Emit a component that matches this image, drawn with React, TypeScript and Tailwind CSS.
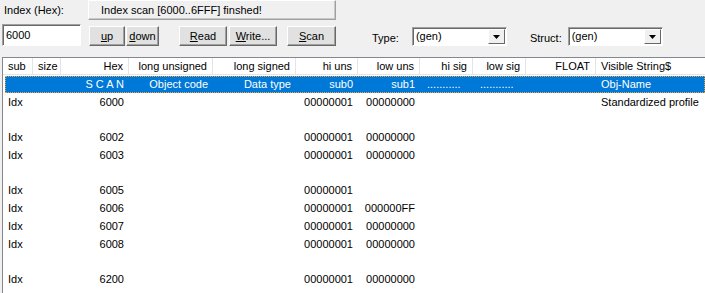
import React from "react";

type Col = { w: number; label: string; align: "left" | "right" };

const cols: Col[] = [
  { w: 30, label: "sub", align: "left" },
  { w: 28, label: "size", align: "left" },
  { w: 68, label: "Hex", align: "right" },
  { w: 84, label: "long unsigned", align: "right" },
  { w: 83, label: "long signed", align: "right" },
  { w: 62, label: "hi uns", align: "right" },
  { w: 62, label: "low uns", align: "right" },
  { w: 53, label: "hi sig", align: "right" },
  { w: 53, label: "low sig", align: "right" },
  { w: 70, label: "FLOAT", align: "right" },
  { w: 0, label: "Visible String$", align: "left" },
];

// one entry per list row, null = empty line
const rows: (string[] | null)[] = [
  ["Idx", "", "6000", "", "", "00000001", "00000000", "", "", "", "Standardized profile"],
  null,
  ["Idx", "", "6002", "", "", "00000001", "00000000", "", "", "", ""],
  ["Idx", "", "6003", "", "", "00000001", "00000000", "", "", "", ""],
  null,
  ["Idx", "", "6005", "", "", "00000001", "", "", "", "", ""],
  ["Idx", "", "6006", "", "", "00000001", "000000FF", "", "", "", ""],
  ["Idx", "", "6007", "", "", "00000001", "00000000", "", "", "", ""],
  ["Idx", "", "6008", "", "", "00000001", "00000000", "", "", "", ""],
  null,
  ["Idx", "", "6200", "", "", "00000001", "00000000", "", "", "", ""],
];

const selected = ["", "", "S C A N", "Object code", "Data type", "sub0", "sub1", "...........", "...........", "", "Obj-Name"];

const Btn = ({ children, w, ml }: { children: React.ReactNode; w: string; ml: string }) => (
  <button
    className={`${w} ${ml} h-[20px] mt-[2px] bg-[#e1e1e1] border border-t-white border-l-white border-r-[#696969] border-b-[#696969] shadow-[inset_-1px_-1px_0_#a0a0a0] text-[11px] text-black leading-none flex items-center justify-center`}
  >
    {children}
  </button>
);

const Combo = ({ ml }: { ml: string }) => (
  <div
    className={`${ml} w-[95px] h-[19px] mt-[3px] bg-white border border-t-[#a0a0a0] border-l-[#a0a0a0] border-r-white border-b-white shadow-[inset_1px_1px_0_#696969] flex items-center`}
  >
    <span className="flex-1 pl-[3px] text-[11px] text-black">(gen)</span>
    <div className="w-[17px] h-[15px] mr-[1px] bg-[#f0f0f0] border border-t-white border-l-white border-r-[#696969] border-b-[#696969] flex items-center justify-center">
      <svg width="7" height="4" viewBox="0 0 7 4">
        <polygon points="0,0 7,0 3.5,4" fill="#000" />
      </svg>
    </div>
  </div>
);

const Cell = ({ col, text, header, idx }: { col: Col; text: string; header?: boolean; idx: number }) => {
  // the dotted placeholders in hi sig / low sig sit left in their cells
  const dots = text.startsWith("...");
  const align = dots ? "justify-start pl-[7px]" : col.align === "right" ? "justify-end pr-[5px]" : "justify-start pl-[5px]";
  return (
    <div
      className={`${col.w ? "shrink-0" : "flex-1"} h-full flex items-center whitespace-nowrap overflow-hidden ${align} ${
        header && col.w ? "border-r border-[#e5e5e5]" : ""
      }`}
      style={col.w ? { width: col.w } : undefined}
      data-col={idx}
    >
      {text}
    </div>
  );
};

export default function App() {
  return (
    <div
      className="w-[705px] h-[293px] bg-[#f0f0f0] overflow-hidden text-[11px] text-black"
      style={{ fontFamily: '"Liberation Sans", Arial, sans-serif' }}
    >
      {/* status line */}
      <div className="flex h-[20px] items-center">
        <div className="w-[88px] pl-[4px]">Index (Hex):</div>
        <div className="w-[248px] h-[20px] bg-[#f0f0f0] border border-t-white border-l-white border-r-[#a0a0a0] border-b-[#a0a0a0] shadow-[inset_-1px_-1px_0_#c8c8c8] pl-[12px] flex items-center">
          Index scan [6000..6FFF] finshed!
        </div>
      </div>

      {/* toolbar */}
      <div className="flex items-start h-[33px] mt-[4px]">
        <div className="ml-[2px] w-[79px] h-[22px] bg-white border border-t-[#a0a0a0] border-l-[#a0a0a0] border-r-white border-b-white shadow-[inset_1px_1px_0_#696969] pl-[3px] flex items-center">
          6000
        </div>
        <Btn w="w-[36px]" ml="ml-[8px]"><span><u>u</u>p</span></Btn>
        <Btn w="w-[33px]" ml="ml-[1px]"><span><u>d</u>own</span></Btn>
        <Btn w="w-[48px]" ml="ml-[20px]"><span><u>R</u>ead</span></Btn>
        <Btn w="w-[48px]" ml="ml-[2px]"><span><u>W</u>rite...</span></Btn>
        <Btn w="w-[49px]" ml="ml-[10px]"><span><u>S</u>can</span></Btn>
        <div className="ml-[36px] mt-[6px]">Type:</div>
        <Combo ml="ml-[13px]" />
        <div className="ml-[23px] mt-[6px]">Struct:</div>
        <Combo ml="ml-[6px]" />
      </div>

      {/* list view */}
      <div className="ml-[2px] h-[236px] bg-white border-l border-t border-[#828790]">
        <div className="flex h-[17px] border-b border-[#e5e5e5]">
          {cols.map((c, i) => (
            <Cell key={i} idx={i} col={c} text={c.label} header />
          ))}
        </div>
        <div className="flex h-[17px] mt-[1px] ml-[2px] bg-[#0078d7] text-white outline outline-1 outline-dotted outline-[#f0a030] -outline-offset-1">
          {cols.map((c, i) => (
            <Cell key={i} idx={i} col={i === 0 ? { ...c, w: c.w - 2 } : c} text={selected[i]} />
          ))}
        </div>
        {rows.map((r, ri) => (
          <div key={ri} className="flex h-[17.75px]">
            {r && cols.map((c, i) => <Cell key={i} idx={i} col={c} text={r[i]} />)}
          </div>
        ))}
      </div>
    </div>
  );
}
